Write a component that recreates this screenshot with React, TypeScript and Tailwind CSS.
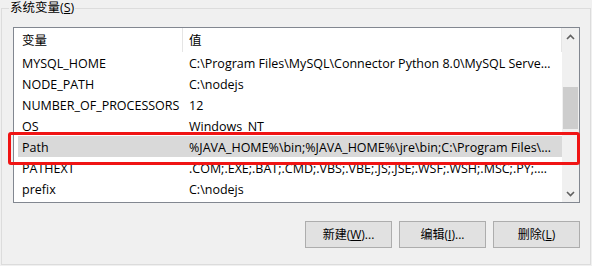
import React from "react";

const rows = [
  { name: "MYSQL_HOME", value: "C:\\Program Files\\MySQL\\Connector Python 8.0\\MySQL Server 8.0\\bin" },
  { name: "NODE_PATH", value: "C:\\nodejs" },
  { name: "NUMBER_OF_PROCESSORS", value: "12" },
  { name: "OS", value: "Windows_NT" },
  { name: "Path", value: "%JAVA_HOME%\\bin;%JAVA_HOME%\\jre\\bin;C:\\Program Files\\Common Files\\Oracle\\Java" },
  { name: "PATHEXT", value: ".COM;.EXE;.BAT;.CMD;.VBS;.VBE;.JS;.JSE;.WSF;.WSH;.MSC;.PY;.PYW;.RB;.RBW" },
  { name: "prefix", value: "C:\\nodejs" },
];

const font = "font-['Segoe_UI','Open_Sans','Noto_Sans_CJK_SC',sans-serif]";

function Chevron({ up }: { up?: boolean }) {
  return (
    <svg width="9" height="6" viewBox="0 0 9 6">
      <polyline
        points={up ? "1,5 4.5,1.5 8,5" : "1,1 4.5,4.5 8,1"}
        fill="none"
        stroke="#606060"
        strokeWidth="1.6"
      />
    </svg>
  );
}

function Btn({ label, hot, tail }: { label: string; hot: string; tail: string }) {
  return (
    <button className="w-[87px] h-[27px] bg-[#e1e1e1] border border-[#adadad] text-[12px] text-black flex items-center justify-center">
      {label}(<span className="underline">{hot}</span>){tail}
    </button>
  );
}

export default function App() {
  return (
    <div className={`relative w-[592px] h-[266px] bg-[#f0f0f0] overflow-hidden ${font} text-[12.5px] text-black`}>
      <div className="relative mt-[8px] ml-[1px] w-[590px] h-[257px] border border-[#dcdcdc] flex flex-col">
        {/* group label */}
        <span className="absolute left-[7px] top-[-9px] px-[1px] bg-[#f0f0f0] leading-[16px]">
          系统变量(<span className="underline">S</span>)
        </span>

        {/* list view */}
        <div className="ml-[11px] mt-[18px] w-[567px] h-[176px] border border-[#828790] bg-white flex">
          <div className="flex-1 flex flex-col min-w-0">
            {/* header */}
            <div className="h-[24px] flex items-center">
              <div className="ml-[4px] w-[165px] h-full pl-[4px] pt-[3px] flex items-center border-r border-[#e5e5e5]">变量</div>
              <div className="flex-1 h-full pl-[6px] pt-[3px] flex items-center border-r border-[#e5e5e5]">值</div>
            </div>
            {rows.map((r) => (
              <div
                key={r.name}
                className={`ml-[4px] h-[21px] pt-[3px] flex items-center ${r.name === "Path" ? "bg-[#d9d9d9]" : ""}`}
              >
                <div className="w-[165px] pl-[4px] whitespace-nowrap overflow-hidden">{r.name}</div>
                <div className="flex-1 min-w-0 pl-[6px] pr-[8px] whitespace-nowrap overflow-hidden text-ellipsis">
                  {r.value}
                </div>
              </div>
            ))}
          </div>

          {/* scrollbar */}
          <div className="w-[17px] bg-[#f0f0f0] flex flex-col">
            <div className="h-[17px] flex items-center justify-center">
              <Chevron up />
            </div>
            <div className="h-[42px]" />
            <div className="mx-[1px] h-[42px] bg-[#cdcdcd]" />
            <div className="flex-1" />
            <div className="h-[17px] flex items-center justify-center">
              <Chevron />
            </div>
          </div>
        </div>

        {/* buttons */}
        <div className="mt-[18px] pr-[10px] flex justify-end gap-[7px]">
          <Btn label="新建" hot="W" tail="..." />
          <Btn label="编辑" hot="I" tail="..." />
          <Btn label="删除" hot="L" tail="" />
        </div>
      </div>

      {/* red highlight annotation */}
      <div className="absolute left-[8px] top-[132px] w-[572px] h-[33px] border-[3px] border-[#f01414] rounded-[3px]" />
    </div>
  );
}
